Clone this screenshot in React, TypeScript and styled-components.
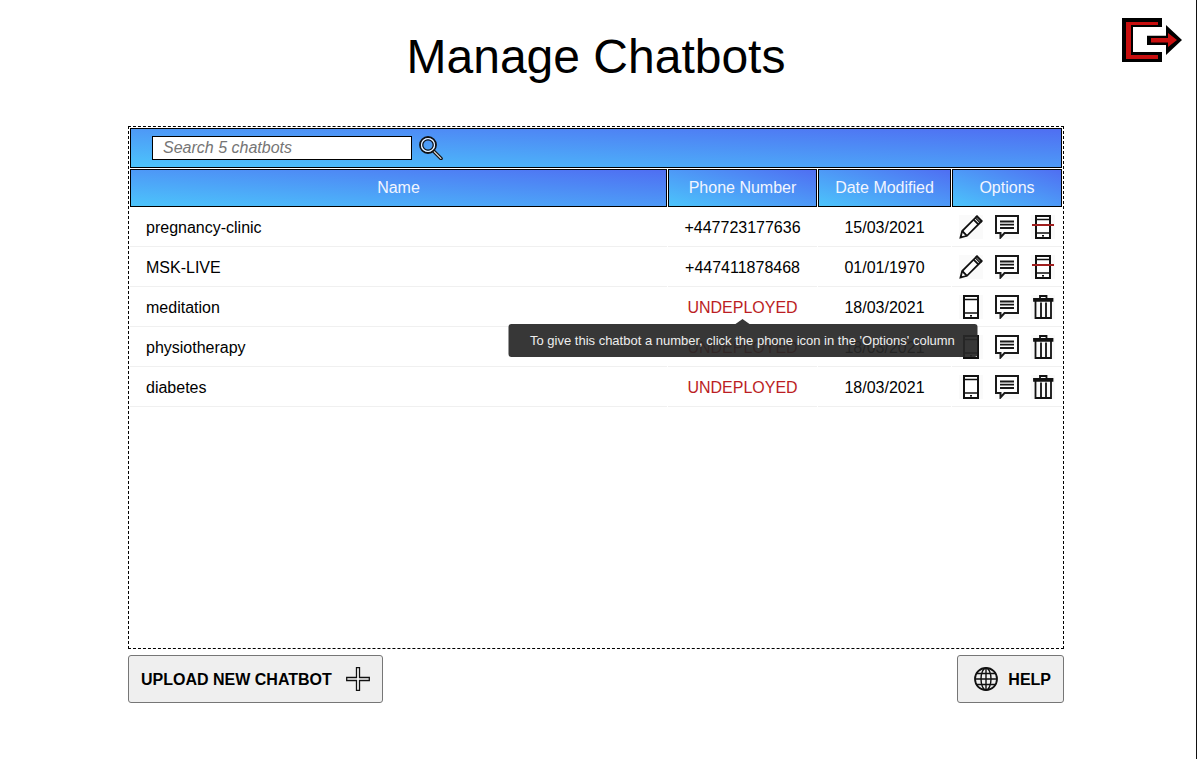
import React from 'react'
import styled, { createGlobalStyle } from 'styled-components'

interface Bot {
    name: string
    phone: string | null
    date: string
}

const bots: Bot[] = [
    { name: 'pregnancy-clinic', phone: '+447723177636', date: '15/03/2021' },
    { name: 'MSK-LIVE', phone: '+447411878468', date: '01/01/1970' },
    { name: 'meditation', phone: null, date: '18/03/2021' },
    { name: 'physiotherapy', phone: null, date: '18/03/2021' },
    { name: 'diabetes', phone: null, date: '18/03/2021' },
]

const Global = createGlobalStyle`
    html, body { margin: 0; padding: 0; background: #fff; }
    body { font-family: "Liberation Sans", Arial, sans-serif; color: #000; overflow: hidden; }
`

const Page = styled.div`
    width: 1196px;
    height: 759px;
    border-right: 1px solid #111;
    box-sizing: content-box;
`

const Top = styled.header`
    display: grid;
    grid-template-columns: 128px 936px 1fr;
    height: 126px;
`

const Title = styled.h1`
    grid-column: 2;
    margin: 28px 0 0;
    font-size: 48px;
    line-height: 58px;
    font-weight: 400;
    text-align: center;
`

const Exit = styled.button`
    grid-column: 3;
    justify-self: end;
    align-self: start;
    margin: 16px 14px 0 0;
    padding: 0;
    width: 62px;
    height: 48px;
    border: 0;
    background: none;
    svg { display: block; }
`

const Main = styled.main`
    margin-left: 128px;
    width: 936px;
`

const Panel = styled.section`
    box-sizing: border-box;
    height: 523px;
    border: 1px dashed #000;
    padding: 1px;
`

const SearchBar = styled.div`
    box-sizing: border-box;
    height: 40px;
    display: flex;
    align-items: center;
    gap: 7px;
    padding-left: 21px;
    border: 1px solid #000;
    background: linear-gradient(to top right, #4cc4fb, #4f6ef2);
`

const SearchInput = styled.input`
    box-sizing: border-box;
    width: 260px;
    height: 24px;
    padding: 0 10px;
    border: 1px solid #000;
    border-radius: 0;
    outline: 0;
    background: #fff;
    font: italic 16px "Liberation Sans", Arial, sans-serif;
    &::placeholder { color: #757575; opacity: 1; }
`

const Cols = styled.div`
    display: grid;
    grid-template-columns: 537px 149px 133px 110px;
    column-gap: 1px;
`

const HeadRow = styled(Cols)`
    margin-top: 1px;
`

const Head = styled.div`
    box-sizing: border-box;
    height: 38px;
    display: flex;
    align-items: center;
    justify-content: center;
    border: 1px solid #000;
    background: linear-gradient(to top right, #4cc4fb, #4f6ef2);
    color: #f2f5ff;
    font-size: 16px;
`

const Row = styled(Cols)`
    height: 40px;
`

const Cell = styled.div<{ $left?: boolean; $red?: boolean }>`
    position: relative;
    box-sizing: border-box;
    display: flex;
    align-items: center;
    justify-content: ${p => (p.$left ? 'flex-start' : 'center')};
    padding: 2px 0 0 ${p => (p.$left ? '16px' : '0')};
    border-bottom: 1px solid #f0f0f0;
    font-size: 16px;
    color: ${p => (p.$red ? '#bb1e24' : '#000')};
`

const Options = styled(Cell)`
    justify-content: flex-start;
    gap: 12px;
    padding: 0 0 0 7px;
`

const IconBox = styled.span`
    display: block;
    width: 24px;
    height: 24px;
    background: #fafafa;
    svg { display: block; }
`

const Tip = styled.div`
    position: absolute;
    left: 50%;
    top: 37px;
    z-index: 2;
    transform: translateX(-50%);
    box-sizing: border-box;
    width: 469px;
    height: 33px;
    padding-left: 22px;
    display: flex;
    align-items: center;
    border-radius: 3px;
    background: rgba(40, 40, 40, 0.93);
    color: #eee;
    font: 13px/1 "Liberation Sans", Arial, sans-serif;
    white-space: nowrap;
    &::before {
        content: '';
        position: absolute;
        left: 50%;
        top: -5px;
        margin-left: -7px;
        border: solid transparent;
        border-width: 0 7px 5px;
        border-bottom-color: rgba(40, 40, 40, 0.93);
    }
`

const Actions = styled.div`
    display: flex;
    justify-content: space-between;
    margin-top: 6px;
`

const Btn = styled.button`
    box-sizing: border-box;
    height: 48px;
    display: flex;
    align-items: center;
    gap: 14px;
    padding: 0 12px;
    border: 1px solid #767676;
    border-radius: 3px;
    background: #efefef;
    color: #000;
    font: 700 16px "Liberation Sans", Arial, sans-serif;
`

const HelpBtn = styled(Btn)`
    gap: 10px;
    padding: 0 12px 0 16px;
`

const BtnLabel = styled.span`
    padding-top: 2px;
`

const PencilIcon = () => (
    <svg width="24" height="24" viewBox="0 0 24 24" fill="none" stroke="#111" strokeWidth="1.8">
        <path d="M1.5 22.5 L3.2 16 L16.5 2.7 L21.3 7.5 L8 20.8 Z" fill="#fff" />
        <path d="M3.2 16 L8 20.8 M14.6 4.6 L19.4 9.4 M1.5 22.5 L3.2 20.8" />
        <path d="M16.5 2.7 L18 1.2 L22.8 6 L21.3 7.5" fill="#666" />
    </svg>
)

const ChatIcon = () => (
    <svg width="24" height="24" viewBox="0 0 24 24" fill="none" stroke="#1a1a1a" strokeWidth="2">
        <path d="M1 1 H23 V18 H9.5 L5.5 22.5 V18 H1 Z" fill="#fff" />
        <path d="M5 6.5 H19 M5 9.7 H19 M5 13 H19" strokeWidth="1.8" />
    </svg>
)

const PhoneIcon = ({ crossed }: { crossed?: boolean }) => (
    <svg width="24" height="24" viewBox="0 0 24 24" fill="none" stroke="#111" strokeWidth="2">
        <rect x="5" y="1" width="14" height="22" fill="#fff" />
        <path d="M5 4.5 H19 M5 18 H19" strokeWidth="1.6" />
        <rect x="11" y="20" width="2" height="1.6" fill="#111" stroke="none" />
        {crossed && <path d="M1 10 H23" stroke="#a01e1e" strokeWidth="2" />}
    </svg>
)

const TrashIcon = () => (
    <svg width="24" height="24" viewBox="0 0 24 24" fill="none" stroke="#111" strokeWidth="1.8">
        <path d="M9 3.5 V1 H15.5 V3.5" />
        <path d="M3 4 H21.5 V5.8 H3 Z" fill="#333" />
        <path d="M4.5 6 V23 H20 V6 M10 7.5 V23 M15 7.5 V23" />
    </svg>
)

const SearchIcon = () => (
    <svg width="24" height="24" viewBox="0 0 24 24" fill="none">
        <path d="M14 14.5 L22 22.5" stroke="#111" strokeWidth="3.6" strokeLinecap="round" />
        <path d="M14.5 15 L22 22.5" stroke="#ddd" strokeWidth="1.1" strokeLinecap="round" />
        <circle cx="9" cy="9" r="8" stroke="#111" strokeWidth="1.8" />
        <circle cx="9" cy="9" r="6.4" stroke="#f4f8ff" strokeWidth="1.4" />
        <circle cx="9" cy="9" r="5.2" stroke="#111" strokeWidth="1.2" />
    </svg>
)

const ExitIcon = () => (
    <svg width="62" height="48" viewBox="0 0 62 48">
        <path d="M2 2 H42 V11 H13 V36 H42 V46 H2 Z" fill="#000" />
        <path d="M6 6 H38 V9 H11 V39 H38 V43 H6 Z" fill="#c80f0f" />
        <path d="M27 19.7 H46 V9 L62 24 L46 39 V29 H27 Z" fill="#000" />
        <path d="M31 22 H48 V17 L57 24 L48 31 V26.5 H31 Z" fill="#c80f0f" />
    </svg>
)

const PlusIcon = () => (
    <svg width="24" height="24" viewBox="0 0 24 24" fill="#fff" stroke="#111" strokeWidth="1.3">
        <path d="M10.5 0.7 H13.5 V10.5 H23.3 V13.5 H13.5 V23.3 H10.5 V13.5 H0.7 V10.5 H10.5 Z" />
    </svg>
)

const GlobeIcon = () => (
    <svg width="24" height="24" viewBox="0 0 24 24" fill="none" stroke="#111" strokeWidth="1.4">
        <circle cx="12" cy="12" r="11" strokeWidth="1.8" />
        <ellipse cx="12" cy="12" rx="5" ry="11" />
        <path d="M12 1 V23 M1 12 H23 M2.6 6.5 H21.4 M2.6 17.5 H21.4" />
    </svg>
)

const App = () => {
    return (
        <Page>
            <Global />
            <Top>
                <Title>Manage Chatbots</Title>
                <Exit aria-label="Log out"><ExitIcon /></Exit>
            </Top>
            <Main>
                <Panel>
                    <SearchBar>
                        <SearchInput placeholder="Search 5 chatbots" />
                        <SearchIcon />
                    </SearchBar>
                    <HeadRow>
                        <Head>Name</Head>
                        <Head>Phone Number</Head>
                        <Head>Date Modified</Head>
                        <Head>Options</Head>
                    </HeadRow>
                    {bots.map((bot, i) => (
                        <Row key={bot.name}>
                            <Cell $left>{bot.name}</Cell>
                            <Cell $red={!bot.phone}>
                                {bot.phone || 'UNDEPLOYED'}
                                {i === 2 && (
                                    <Tip>To give this chatbot a number, click the phone icon in the 'Options' column</Tip>
                                )}
                            </Cell>
                            <Cell>{bot.date}</Cell>
                            <Options>
                                <IconBox>{bot.phone ? <PencilIcon /> : <PhoneIcon />}</IconBox>
                                <IconBox><ChatIcon /></IconBox>
                                <IconBox>{bot.phone ? <PhoneIcon crossed /> : <TrashIcon />}</IconBox>
                            </Options>
                        </Row>
                    ))}
                </Panel>
                <Actions>
                    <Btn><BtnLabel>UPLOAD NEW CHATBOT</BtnLabel> <PlusIcon /></Btn>
                    <HelpBtn><GlobeIcon /> <BtnLabel>HELP</BtnLabel></HelpBtn>
                </Actions>
            </Main>
        </Page>
    )
}

export default App
